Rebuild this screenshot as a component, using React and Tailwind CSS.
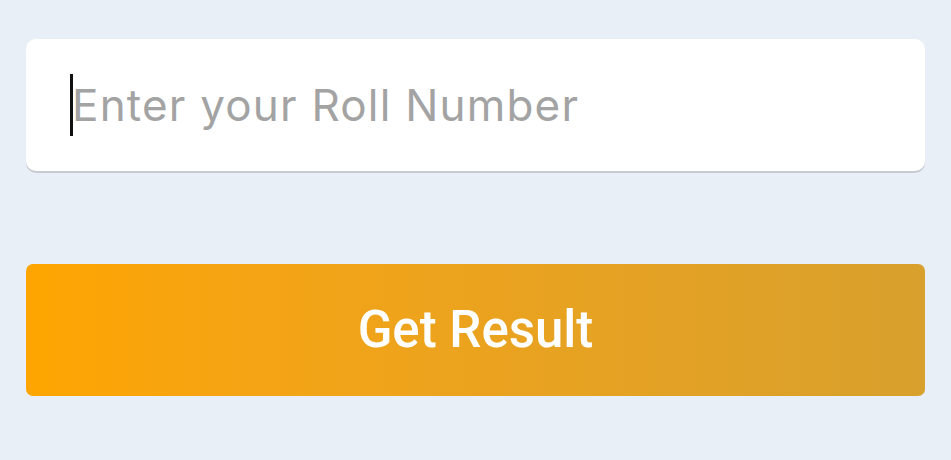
export default function App() {
  return (
    <div className="w-[951px] h-[460px] bg-[#e8eff7] pt-[39px] px-[26px]">
      <div className="h-[132px] bg-white rounded-[10px] shadow-[0_2px_0_0_#c8ccd2] flex items-center pl-[44px]">
        <div className="flex items-center">
          <span className="inline-block w-[3px] h-[62px] bg-[#111] mr-[-1px]" />
          <span
            className="text-[44px] text-[#a3a3a3] leading-none tracking-[1.2px]"
            style={{ fontFamily: "Inter, 'Noto Sans', sans-serif" }}
          >
            Enter your Roll Number
          </span>
        </div>
      </div>
      <div className="mt-[93px] h-[132px] rounded-[7px] bg-gradient-to-r from-[#fea500] to-[#d8a02c] flex items-center justify-center">
        <span
          className="text-[51px] font-medium text-white leading-none pb-[2px]"
          style={{ fontFamily: "Roboto, sans-serif" }}
        >
          Get Result
        </span>
      </div>
    </div>
  );
}
